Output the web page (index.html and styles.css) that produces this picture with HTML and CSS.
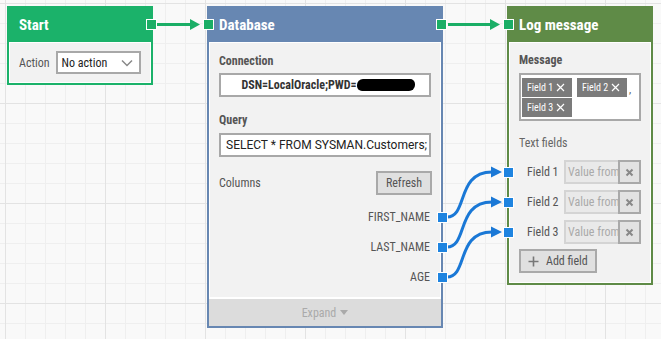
FILE: index.html
```html
<!DOCTYPE html>
<html>
<head>
<meta charset="utf-8">
<link rel="stylesheet" href="styles.css">
</head>
<body>
<div class="canvas">
  <svg class="wires" width="661" height="339" viewBox="0 0 661 339">
    <g class="wire-green">
      <line x1="157" y1="24.5" x2="191" y2="24.5"/>
      <polygon points="190,19 200,24.5 190,30"/>
      <line x1="448" y1="24.5" x2="491" y2="24.5"/>
      <polygon points="490,19 500,24.5 490,30"/>
    </g>
    <g class="wire-blue">
      <path d="M447 217 C468 217 456 172 492 172"/>
      <polygon points="491,166.5 502,172 491,177.5"/>
      <path d="M447 247 C468 247 456 202 492 202"/>
      <polygon points="491,196.5 502,202 491,207.5"/>
      <path d="M447 277 C468 277 456 232 492 232"/>
      <polygon points="491,226.5 502,232 491,237.5"/>
    </g>
  </svg>

  <div class="node node-start">
    <div class="node-head">Start<span class="port port-out port-green"></span></div>
    <div class="node-body start-body">
      <span class="text">Action</span>
      <div class="select">
        <span>No action</span>
        <svg class="chev" width="12" height="8" viewBox="0 0 12 8"><polyline points="1,1.5 6,6.5 11,1.5"/></svg>
      </div>
    </div>
  </div>

  <div class="node node-db">
    <div class="node-head"><span class="port port-in port-green"></span>Database<span class="port port-out port-green"></span></div>
    <div class="node-body db-body">
      <div class="label">Connection</div>
      <div class="field field-center"><span class="dsn">DSN=LocalOracle;PWD=</span><span class="redact"></span></div>
      <div class="label label-gap">Query</div>
      <div class="field field-query">SELECT * FROM SYSMAN.Customers;</div>
      <div class="columns-head">
        <span class="text">Columns</span>
        <button class="btn btn-refresh">Refresh</button>
      </div>
      <div class="col-list">
        <div class="col-row">FIRST_NAME<span class="port port-col port-blue"></span></div>
        <div class="col-row">LAST_NAME<span class="port port-col port-blue"></span></div>
        <div class="col-row">AGE<span class="port port-col port-blue"></span></div>
      </div>
    </div>
    <div class="expand">Expand <span class="tri"></span></div>
  </div>

  <div class="node node-log">
    <div class="node-head"><span class="port port-in port-green"></span>Log message</div>
    <div class="node-body log-body">
      <div class="label label-msg">Message</div>
      <div class="tagbox">
        <span class="tag">Field 1<svg class="tag-x" width="9" height="9" viewBox="0 0 9 9"><path d="M1 1L8 8M8 1L1 8"/></svg></span>
        <span class="tag">Field 2<svg class="tag-x" width="9" height="9" viewBox="0 0 9 9"><path d="M1 1L8 8M8 1L1 8"/></svg></span><span class="comma">,</span>
        <span class="tag">Field 3<svg class="tag-x" width="9" height="9" viewBox="0 0 9 9"><path d="M1 1L8 8M8 1L1 8"/></svg></span>
      </div>
      <div class="text text-fields">Text fields</div>
      <div class="tf-list">
        <div class="tf-row"><span class="port port-tf port-blue"></span><span class="tf-label">Field 1</span><span class="tf-input">Value from</span><span class="tf-del"><svg width="9" height="9" viewBox="0 0 9 9"><path d="M1.5 1.5L7.5 7.5M7.5 1.5L1.5 7.5"/></svg></span></div>
        <div class="tf-row"><span class="port port-tf port-blue"></span><span class="tf-label">Field 2</span><span class="tf-input">Value from</span><span class="tf-del"><svg width="9" height="9" viewBox="0 0 9 9"><path d="M1.5 1.5L7.5 7.5M7.5 1.5L1.5 7.5"/></svg></span></div>
        <div class="tf-row"><span class="port port-tf port-blue"></span><span class="tf-label">Field 3</span><span class="tf-input">Value from</span><span class="tf-del"><svg width="9" height="9" viewBox="0 0 9 9"><path d="M1.5 1.5L7.5 7.5M7.5 1.5L1.5 7.5"/></svg></span></div>
      </div>
      <button class="btn btn-add"><svg class="plus" width="11" height="11" viewBox="0 0 11 11"><path d="M5.5 0.5V10.5M0.5 5.5H10.5"/></svg>Add field</button>
    </div>
  </div>
</div>
</body>
</html>
```

FILE: styles.css
```css
* { box-sizing: border-box; }

body {
  margin: 0;
  font-family: Roboto, "Liberation Sans", sans-serif;
  font-stretch: 80%;
  color: #555;
}

.canvas {
  position: relative;
  width: 661px;
  height: 339px;
  overflow: hidden;
  background-color: #f9f9f9;
  background-image:
    linear-gradient(to right, #e3e3e3 1px, transparent 1px),
    linear-gradient(to bottom, #e3e3e3 1px, transparent 1px),
    linear-gradient(to right, #efefef 1px, transparent 1px),
    linear-gradient(to bottom, #efefef 1px, transparent 1px);
  background-size: 100px 100px, 100px 100px, 20px 20px, 20px 20px;
  background-position: 5px 3px, 5px 3px, 5px 3px, 5px 3px;
}

.wires { position: absolute; left: 0; top: 0; }
.wire-green line { stroke: #1aae66; stroke-width: 3; }
.wire-green polygon { fill: #1aae66; }
.wire-blue path { fill: none; stroke: #1a78d6; stroke-width: 3; }
.wire-blue polygon { fill: #1a78d6; }

.node {
  position: absolute;
  display: flex;
  flex-direction: column;
  border: 2px solid;
  background: #fff;
}
.node-head {
  position: relative;
  height: 34px;
  flex: none;
  display: flex;
  align-items: center;
  padding-left: 10px;
  color: #fff;
  font-size: 15px;
  font-weight: 700;
}
.node-body {
  margin: 1px;
  flex: 1;
  background: #f2f2f2;
  padding: 0 9px;
}

.node-start { left: 7px; top: 6px; width: 146px; height: 79px; border-color: #1bb26a; }
.node-start .node-head { background: #1bb26a; }
.node-db { left: 207px; top: 6px; width: 236px; height: 322px; border-color: #6787b2; }
.node-db .node-head { background: #6787b2; }
.node-log { left: 507px; top: 6px; width: 146px; height: 279px; border-color: #5f8b47; }
.node-log .node-head { background: #5f8b47; }

.port {
  position: absolute;
  width: 11px;
  height: 11px;
  border: 1px solid #fff;
}
.port-green { background: #1aae66; }
.port-blue { background: #1e84e0; }
.port-out { right: -6px; top: 11px; }
.port-in { left: -6px; top: 11px; }

.text { font-size: 12px; color: #555; }
.label { font-size: 12px; font-weight: 700; color: #555; line-height: 14px; }

/* start */
.start-body {
  display: flex;
  align-items: center;
  gap: 6px;
}
.select {
  width: 85px;
  height: 23px;
  border: 2px solid #a8a8a8;
  background: #fff;
  display: flex;
  align-items: center;
  justify-content: space-between;
  padding: 0 6px 0 4px;
  font-size: 12px;
  color: #222;
}
.chev polyline { fill: none; stroke: #888; stroke-width: 1.5; }

/* database */
.db-body {
  margin-bottom: 0;
  padding-top: 11px;
  padding-bottom: 5px;
}
.field {
  margin-top: 5px;
  height: 24px;
  border: 2px solid #a8a8a8;
  background: #fff;
  display: flex;
  align-items: center;
  font-size: 12px;
}
.field-center { justify-content: center; padding-left: 6px; }
.dsn { font-weight: 700; color: #333; }
.redact {
  display: inline-block;
  width: 58px;
  height: 12px;
  background: #000;
  border-radius: 6px 5px 6px 5px;
}
.label-gap { margin-top: 16px; }
.field-query {
  margin-top: 6px;
  padding-left: 5px;
  font-stretch: 100%;
  color: #222;
}
.columns-head {
  margin-top: 14px;
  height: 24px;
  display: flex;
  align-items: center;
  justify-content: space-between;
}
.btn {
  font-family: inherit;
  font-stretch: inherit;
  font-size: 12px;
  color: #555;
  background: #e0e0e0;
  border: 2px solid #a9a9a9;
  height: 24px;
  padding: 0;
  display: flex;
  align-items: center;
  justify-content: center;
}
.btn-refresh { width: 56px; margin-right: -1px; }
.col-list { margin-top: 7px; }
.col-row {
  position: relative;
  height: 30px;
  display: flex;
  align-items: center;
  justify-content: flex-end;
  padding-right: 1px;
  font-size: 12px;
  color: #555;
}
.port-col { right: -17px; top: 9.5px; }

.expand {
  margin-top: 2px;
  height: 27px;
  flex: none;
  background: #dcdcdc;
  display: flex;
  align-items: center;
  justify-content: center;
  gap: 4px;
  font-size: 12px;
  color: #aaa;
}
.tri {
  width: 0;
  height: 0;
  border-left: 4.5px solid transparent;
  border-right: 4.5px solid transparent;
  border-top: 5px solid #aaa;
}

/* log */
.log-body { padding-top: 10px; padding-bottom: 9px; }
.tagbox {
  margin-top: 6px;
  height: 48px;
  border: 2px solid #a8a8a8;
  background: #fff;
  padding: 3px 1px 0 1px;
  display: flex;
  flex-wrap: wrap;
  align-content: flex-start;
  row-gap: 1px;
}
.tag {
  height: 19px;
  width: 50px;
  margin-right: 5px;
  background: #7b7b7b;
  color: #fff;
  font-size: 10px;
  display: flex;
  align-items: center;
  padding-left: 5px;
  gap: 3px;
}
.tag-x path { stroke: #fff; stroke-width: 1.2; fill: none; }
.comma { font-size: 11px; color: #555; margin-left: -3px; align-self: flex-end; line-height: 14px; }
.text-fields { margin-top: 15px; line-height: 14px; color: #666; }
.tf-list { margin-top: 10px; display: flex; flex-direction: column; gap: 6px; }
.tf-row {
  position: relative;
  height: 24px;
  display: flex;
  align-items: center;
  padding-left: 8px;
  font-size: 12px;
}
.port-tf { left: -16px; top: 6.5px; }
.tf-label { flex: 1; color: #555; }
.tf-input {
  width: 54px;
  height: 24px;
  border: 2px solid #d4d4d4;
  border-right: none;
  background: #e9e9e9;
  color: #aaa;
  padding-left: 2px;
  overflow: hidden;
  white-space: nowrap;
  display: flex;
  align-items: center;
}
.tf-del {
  width: 23px;
  height: 24px;
  border: 2px solid #a9a9a9;
  background: #e2e2e2;
  display: flex;
  align-items: center;
  justify-content: center;
}
.tf-del path { stroke: #888; stroke-width: 2; fill: none; }
.btn-add {
  margin-top: 5px;
  width: 78px;
  justify-content: flex-start;
  padding-left: 7px;
  gap: 7px;
}
.plus path { stroke: #777; stroke-width: 1.6; fill: none; }
```
